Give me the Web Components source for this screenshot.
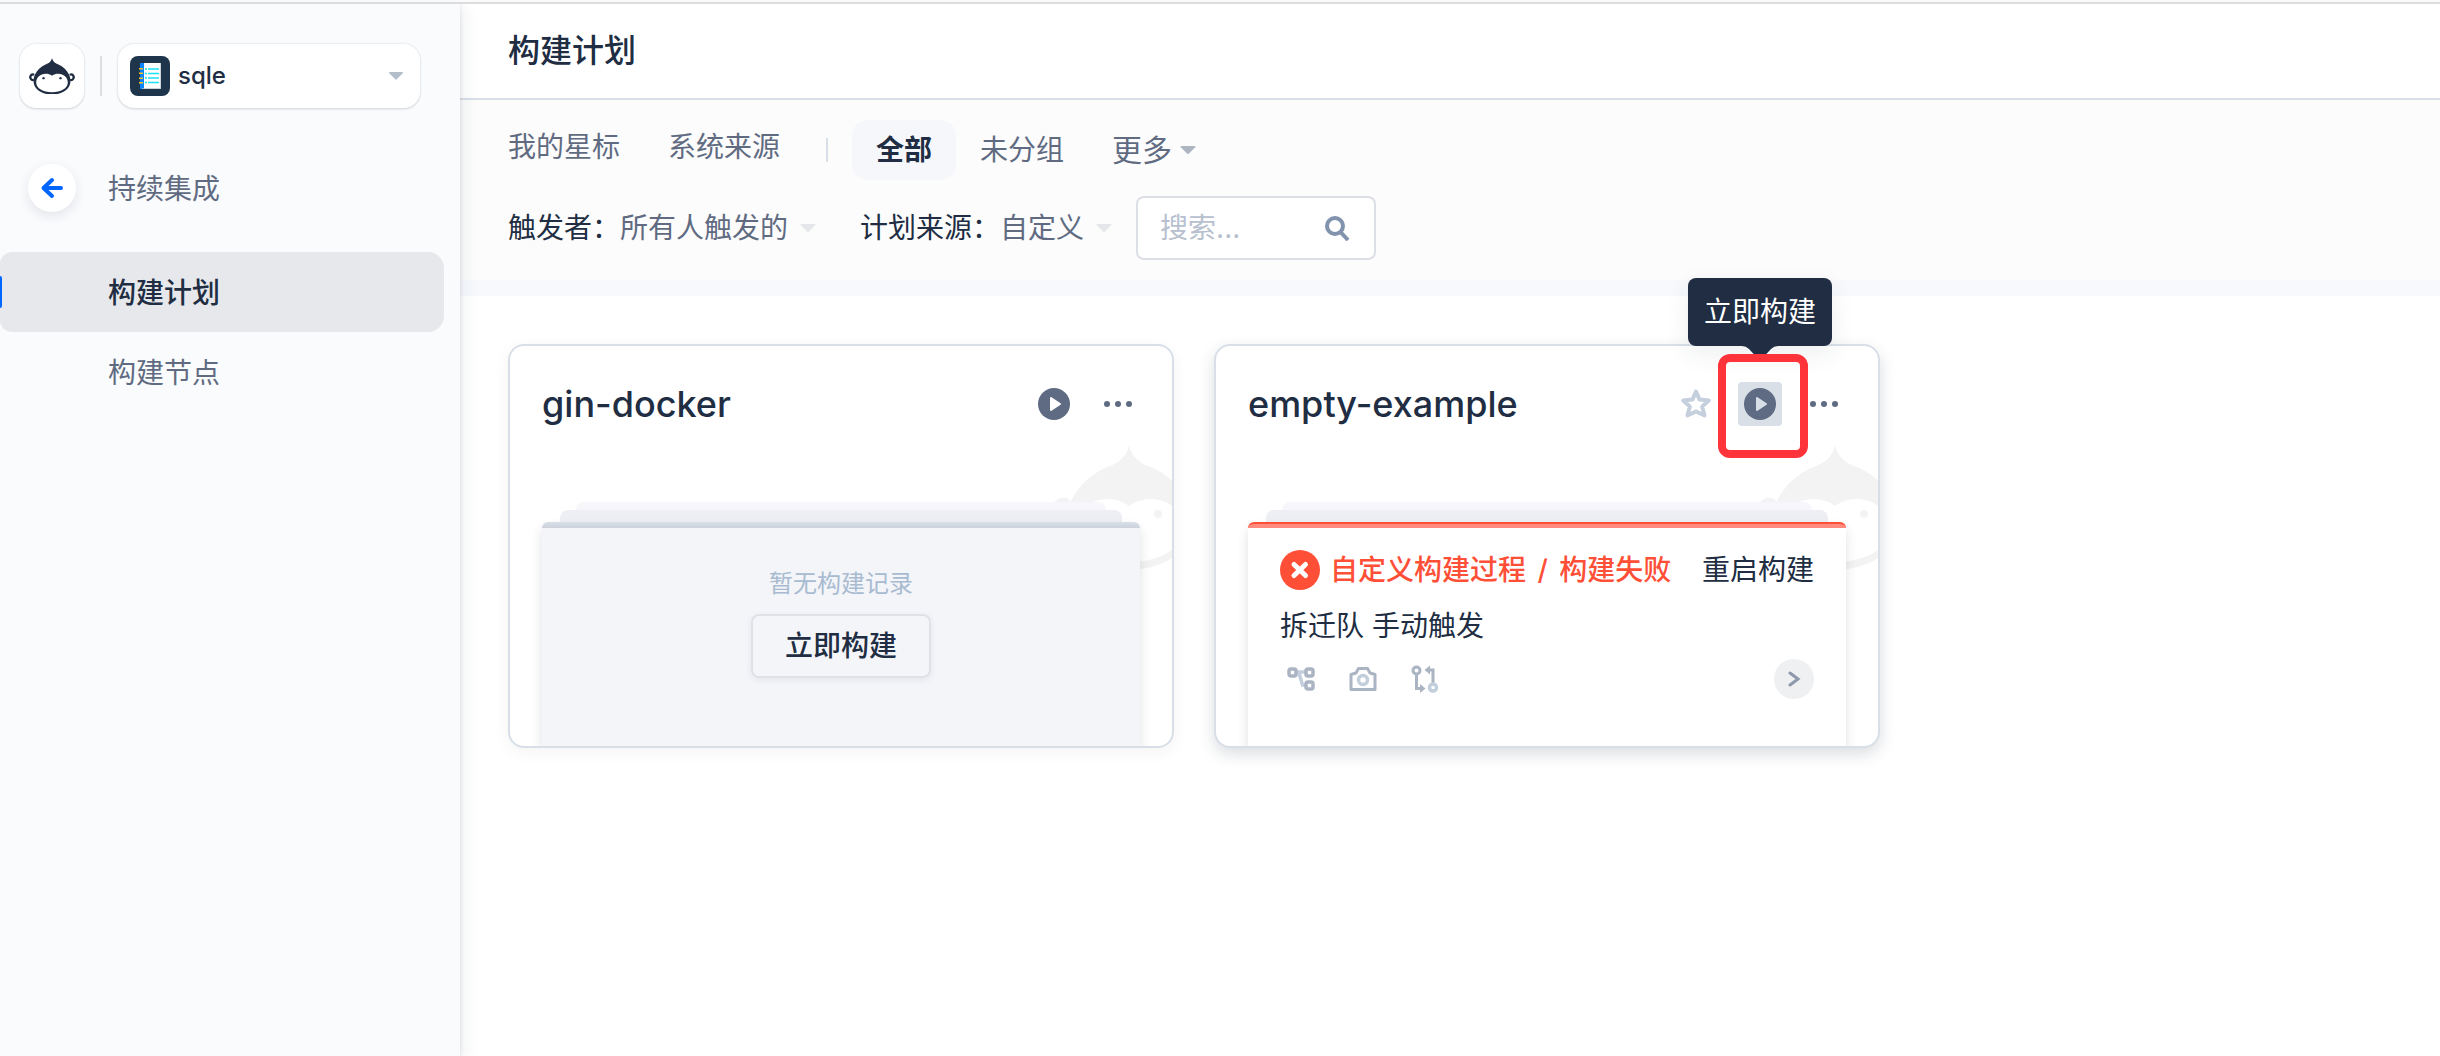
<!DOCTYPE html>
<html lang="zh-CN">
<head>
<meta charset="utf-8">
<title>构建计划</title>
<style>
:root {
  --ink: #202d42;
  --muted: #606b82;
  --line: #d8dfe7;
  --soft: #fafbfd;
  --blue: #0066ff;
  --red: #ff4f37;
}
html, body { margin: 0; min-height: 100%; background: #fff; }
body {
  font: 400 28px/40px Inter, "Noto Sans CJK SC", sans-serif;
  color: var(--ink);
}
</style>
</head>
<body>
<app-shell>
  <side-bar slot="side" project="sqle">
    <nav-item back href="#ci">持续集成</nav-item>
    <nav-item active href="#plans">构建计划</nav-item>
    <nav-item href="#nodes">构建节点</nav-item>
  </side-bar>
  <page-header slot="head">构建计划</page-header>
  <filter-panel slot="head"></filter-panel>
  <plan-card name="gin-docker">
    <empty-record></empty-record>
  </plan-card>
  <plan-card name="empty-example" failed hovered>
    <build-record stage="自定义构建过程" state="构建失败" trigger="拆迁队 手动触发"></build-record>
  </plan-card>
</app-shell>

<script>
const RESET = `
  :host, * { box-sizing: border-box; }
  button, input, select { font: inherit; color: inherit; margin: 0; padding: 0; border: 0; background: none; outline: none; }
  button, select { cursor: pointer; }
  a { color: inherit; text-decoration: none; }
  svg { display: block; }
`;

class BaseElement extends HTMLElement {
  connectedCallback() {
    if (this.shadowRoot) return;
    const root = this.attachShadow({ mode: 'open' });
    root.innerHTML = `<style>${RESET}${this.styles()}</style>${this.markup()}`;
  }
  styles() { return ''; }
  markup() { return '<slot></slot>'; }
}

customElements.define('app-shell', class extends BaseElement {
  styles() { return `
    :host { display: flex; flex-direction: column; min-height: 100vh; }
    .edge { height: 4px; flex: none; background: #fafafa; border-bottom: 2px solid #dcdcde; }
    .body { display: flex; flex: 1; }
    aside { width: 460px; flex: none; background: var(--soft); box-shadow: 0 0 4px rgba(32,45,66,.14), 4px 4px 16px rgba(32,45,66,.07); position: relative; z-index: 1; clip-path: inset(0 -24px 0 0); }
    main { flex: 1; min-width: 0; }
    .grid { display: grid; grid-template-columns: repeat(auto-fill, 666px); gap: 40px; padding: 48px; }
  `; }
  markup() { return `
    <div class="edge"></div>
    <div class="body">
      <aside><slot name="side"></slot></aside>
      <main><slot name="head"></slot><div class="grid"><slot></slot></div></main>
    </div>`; }
});

customElements.define('monkey-mark', class extends BaseElement {
  styles() { return `:host { display: block; } svg { width: 100%; height: auto; }`; }
  markup() { return `
    <svg viewBox="-82 0 164 126" fill="currentColor" aria-hidden="true">
      <path fill-rule="evenodd" d="M0 0C2 12 12 19 22 22C38 29 50 40 58 56C62 64 63 72 63 80C63 106 34 125 0 125S-63 106-63 80C-63 72-62 64-58 56C-50 40-38 29-22 22C-12 19-2 12 0 0Z
        M0 61C7 56 14 54 21 54C40 54 54 66 54 84C54 104 30 117 0 117S-54 104-54 84C-54 66-40 54-21 54C-14 54-7 56 0 61Z"/>
      <circle cx="-29" cy="69" r="4"/><circle cx="29" cy="69" r="4"/>
      <path d="M-59 55A12 13 0 1 0-60 77L-63 71A5 6 0 1 1-62 61Z"/>
      <path d="M59 55A12 13 0 1 1 60 77L63 71A5 6 0 1 0 62 61Z"/>
    </svg>`; }
});

customElements.define('side-bar', class extends BaseElement {
  styles() { return `
    :host { display: block; padding-top: 40px; }
    .top { display: flex; align-items: center; gap: 16px; padding: 0 40px 0 20px; margin-bottom: 40px; }
    .logo, .project { height: 64px; border-radius: 16px; background: #fff; box-shadow: 0 0 2px rgba(32,45,66,.22), 0 2px 2px rgba(32,45,66,.08); }
    .logo { width: 64px; display: grid; place-items: center; }
    monkey-mark { width: 48px; }
    .rule { width: 2px; height: 40px; background: #dcdee2; }
    .project { flex: 1; display: flex; align-items: center; gap: 8px; padding: 0 16px 0 12px; position: relative; }
    select { flex: 1; min-width: 0; appearance: none; font-size: 24px; font-weight: 500; line-height: 32px; height: 40px; }
    .caret { pointer-events: none; }
  `; }
  markup() { return `
    <div class="top">
      <button class="logo" aria-label="首页"><monkey-mark></monkey-mark></button>
      <span class="rule"></span>
      <label class="project">
        <svg width="40" height="40" viewBox="0 0 40 40" aria-hidden="true">
          <rect width="40" height="40" rx="8" fill="#1f354c"/>
          <path d="M10 7h4v26h-4z" fill="#0a84ff"/><path d="M14 7h17v26H14z" fill="#fff"/><path d="M12 32.300h19V33H12zM30.300 7h.7v26h-.7z" fill="#b9c4cc"/>
          <path d="M9 12h4v1.500H9zM9 16.500h4V18H9zM9 21.500h4V23H9zM9 26h4v1.500H9z" fill="#ffc21a"/>
          <path d="M15 13h2m1 0h11M15 17.500h2m1 0h11M15 22h2m1 0h11M15 26.500h2m1 0h11" stroke="#14e4f5" stroke-width="1.500"/>
        </svg>
        <select aria-label="项目"><option>${this.getAttribute('project')}</option></select>
        <svg class="caret" width="16" height="10" viewBox="0 0 16 10"><path d="M2 1h12q2 0 .5 1.500L9 8q-1 1-2 0L1.500 2.500Q0 1 2 1Z" fill="#b4becb"/></svg>
      </label>
    </div>
    <nav><slot></slot></nav>`; }
});

customElements.define('nav-item', class extends BaseElement {
  styles() { return `
    :host { display: block; color: var(--muted); }
    :host([back]) { margin-bottom: 24px; }
    :host([active]) { color: var(--ink); font-weight: 500; }
    a { position: relative; display: flex; align-items: center; height: 80px; margin-right: 16px; padding-left: 108px; border-radius: 12px 16px 16px 12px; }
    .text { padding-top: 2px; }
    :host([active]) a { background: #e7e8ec; }
    :host([active]) a::before { content: ""; position: absolute; left: 0; top: 24px; width: 2px; height: 32px; background: var(--blue); border-radius: 0 2px 2px 0; }
    :host([back]) a { padding-left: 28px; gap: 32px; }
    .round { width: 48px; height: 48px; display: grid; place-items: center; border-radius: 50%; background: #fff; box-shadow: 0 4px 12px rgba(32,45,66,.11); }
  `; }
  markup() {
    const arrow = this.hasAttribute('back') ? `<span class="round"><svg width="24" height="24" viewBox="0 0 24 24" fill="none" stroke="#0066ff" stroke-width="4" stroke-linecap="round" stroke-linejoin="round"><path d="M21 12H4M12 4L3.500 12L12 20"/></svg></span>` : '';
    return `<a href="${this.getAttribute('href')}">${arrow}<span class="text"><slot></slot></span></a>`;
  }
});

customElements.define('page-header', class extends BaseElement {
  styles() { return `
    :host { display: flex; align-items: center; height: 96px; padding: 0 48px; border-bottom: 2px solid var(--line); background: #fff; }
    h1 { margin: 0; font-size: 32px; line-height: 48px; font-weight: 500; }
  `; }
  markup() { return `<h1><slot></slot></h1>`; }
});

customElements.define('filter-panel', class extends BaseElement {
  styles() { return `
    :host { display: flex; flex-direction: column; gap: 16px; padding: 20px 48px; background: #fcfcfc; border-bottom: 16px solid #f7f9fd; }
    .row { display: flex; align-items: center; }
    .tabs { height: 60px; color: var(--muted); }
    .links { display: flex; gap: 48px; padding-bottom: 6px; }
    .rule { width: 2px; height: 24px; margin: 0 24px 0 46px; background: var(--line); }
    .tab { height: 60px; padding: 0 24px; border-radius: 16px; }
    .tab.on { background: #f5f7fb; color: var(--ink); font-weight: 700; }
    .more { display: flex; align-items: center; gap: 8px; font-size: 30px; }
    select { appearance: none; field-sizing: content; color: var(--muted); height: 40px; line-height: 40px; padding-right: 28px; }
    .pick { display: flex; align-items: center; }
    .pick svg { margin-left: -16px; pointer-events: none; }
    .pick + .pick { margin-left: 44px; }
    .search { display: flex; align-items: center; justify-content: space-between; width: 240px; height: 64px; margin-left: 24px; padding: 0 24px 0 22px; border: 2px solid #dddfe6; border-radius: 8px; background: #fff; }
    input { width: 120px; height: 40px; }
    input::placeholder { color: #b7c0ce; opacity: 1; }
  `; }
  markup() {
    const caret = c => `<svg width="16" height="10" viewBox="0 0 16 10"><path d="M1.500 1h13q2 0 .5 1.500L9 8.500q-1 1-2 0L1 2.500Q-.5 1 1.500 1Z" fill="${c}"/></svg>`;
    return `
    <div class="row tabs">
      <div class="links"><a href="#star">我的星标</a><a href="#system">系统来源</a></div>
      <span class="rule"></span>
      <button class="tab on">全部</button>
      <button class="tab">未分组</button>
      <button class="tab more">更多${caret('#adb5c0')}</button>
    </div>
    <div class="row">
      <div class="pick"><label for="who">触发者：</label><select id="who"><option>所有人触发的</option></select>${caret('#e5e7ea')}</div>
      <div class="pick"><label for="src">计划来源：</label><select id="src"><option>自定义</option></select>${caret('#e5e7ea')}</div>
      <label class="search"><input type="text" placeholder="搜索..." aria-label="搜索">
        <svg width="26" height="26" viewBox="0 0 26 26" fill="none" stroke="#8193ad" stroke-width="4"><circle cx="11" cy="11" r="8"/><path d="M16.500 17L24 25"/></svg>
      </label>
    </div>`; }
});

customElements.define('plan-card', class extends BaseElement {
  styles() { return `
    :host { display: block; position: relative; border: 2px solid var(--line); border-radius: 16px; background: #fff; box-shadow: 0 4px 16px rgba(32,45,66,.05); }
    :host([hovered]) { box-shadow: 0 6px 16px rgba(32,45,66,.16); }
    .mark { position: absolute; inset: 0; overflow: hidden; border-radius: 14px; color: #f3f3f3; }
    .mark monkey-mark { position: absolute; left: 537px; top: 99px; width: 164px; }
    header { position: relative; z-index: 1; display: flex; align-items: center; gap: 20px; height: 116px; padding: 0 32px; }
    h2 { flex: 1; min-width: 0; margin: 0; font-size: 36px; line-height: 48px; font-weight: 500; }
    button { width: 44px; height: 44px; display: grid; place-items: center; border-radius: 4px; }
    .play { position: relative; --hole: #fff; }
    :host([hovered]) .play button { background: var(--line); }
    :host([hovered]) .play { --hole: #d8dfe7; }
    .tip { position: absolute; left: 50%; bottom: calc(100% + 36px); translate: -50% 0; padding: 14px 16px; border-radius: 8px; background: var(--ink); color: #fff; white-space: nowrap; box-shadow: 0 8px 24px rgba(32,45,66,.08); }
    .tip svg { position: absolute; top: 100%; left: 50%; margin-left: -18px; }
    .focus { position: absolute; inset: -28px -26px -32px -20px; border: 8px solid #ff343b; border-radius: 12px; pointer-events: none; }
    .stack { position: relative; display: flex; flex-direction: column; align-items: center; margin-top: 40px; padding: 0 32px; overflow: hidden; border-radius: 0 0 14px 14px; }
    .back2 { width: calc(100% - 68px); height: 8px; border-radius: 8px 8px 0 0; background: #f7f7fb; }
    .back1 { width: calc(100% - 36px); height: 12px; border-radius: 8px 8px 0 0; background: #eeeff4; }
    .sheet { width: 100%; border-radius: 8px 8px 0 0; box-shadow: 0 6px 12px rgba(32,45,66,.14); }
    .cap { height: 6px; border-radius: 8px 8px 0 0; background: linear-gradient(#d8dfe7, #ccd2db); }
    :host([failed]) .cap { background: #ff8a7d; border-top: 2px solid var(--red); }
  `; }
  markup() {
    const hovered = this.hasAttribute('hovered');
    return `
    <div class="mark"><monkey-mark></monkey-mark></div>
    <header>
      <h2>${this.getAttribute('name')}</h2>
      ${hovered ? `<button aria-label="星标"><svg width="32" height="32" viewBox="0 0 32 32" fill="none" stroke="#c5cfdd" stroke-width="4" stroke-linejoin="round"><path d="M16 3.500L19.600 11.600L28.800 12.500L22.200 18.500L24.500 27.500L16 23.500L7.500 27.500L9.800 18.500L3.200 12.500L12.400 11.600Z"/></svg></button>` : ''}
      <div class="play">
        <button aria-label="立即构建"><svg width="32" height="32" viewBox="0 0 32 32"><circle cx="16" cy="16" r="16" fill="#5e6b82"/><path d="M13 10L22 16L13 22Z" fill="var(--hole)" stroke="var(--hole)" stroke-width="2" stroke-linejoin="round"/></svg></button>
        ${hovered ? `<div class="tip" role="tooltip">立即构建<svg width="36" height="14" viewBox="0 0 36 14"><path d="M0 0H36Q32 0 29 3L22 10.500Q18 14 14 10.500L7 3Q4 0 0 0Z" fill="#202d42"/></svg></div><span class="focus"></span>` : ''}
      </div>
      <button aria-label="更多操作"><svg width="28" height="6" viewBox="0 0 28 6" fill="#5e6b82"><circle cx="3" cy="3" r="3"/><circle cx="14" cy="3" r="3"/><circle cx="25" cy="3" r="3"/></svg></button>
    </header>
    <div class="stack">
      <div class="back2"></div><div class="back1"></div>
      <div class="sheet"><div class="cap"></div><slot></slot></div>
    </div>`; }
});

customElements.define('empty-record', class extends BaseElement {
  styles() { return `
    :host { display: flex; flex-direction: column; align-items: center; gap: 14px; height: 218px; padding-top: 40px; background: #f3f5f9; }
    p { margin: 0; font-size: 24px; line-height: 32px; color: #a9bbd1; }
    button { height: 64px; padding: 0 32px; border: 2px solid #dfe1e6; border-radius: 8px; font-weight: 500; box-shadow: 0 2px 6px rgba(32,45,66,.08); }
  `; }
  markup() { return `<p>暂无构建记录</p><button>立即构建</button>`; }
});

customElements.define('build-record', class extends BaseElement {
  styles() { return `
    :host { display: flex; flex-direction: column; height: 218px; padding: 22px 32px 0; background: #fff; }
    .row { display: flex; align-items: center; height: 40px; }
    .fail { flex: 1; display: flex; align-items: center; gap: 10px; color: var(--red); font-weight: 500; }
    .slash { margin: 0 4px; }
    p { margin: 16px 0 0; }
    .icons { gap: 34px; margin-top: 13px; padding-left: 7px; }
    .icons button { width: 28px; height: 28px; }
    .icons .go { width: 40px; height: 40px; margin-left: auto; display: grid; place-items: center; border-radius: 50%; background: #eef0f2; }
  `; }
  markup() {
    const a = n => this.getAttribute(n);
    return `
    <div class="row">
      <a class="fail" href="#record"><svg width="40" height="40" viewBox="0 0 40 40"><circle cx="20" cy="20" r="20" fill="#ff4f37"/><path d="M14 14.500L25.500 25.500M25.500 14.500L14 25.500" stroke="#fff" stroke-width="5" stroke-linecap="round"/></svg><span>${a('stage')} <span class="slash">/</span> ${a('state')}</span></a>
      <button>重启构建</button>
    </div>
    <p>${a('trigger')}</p>
    <div class="row icons">
      <button aria-label="流程"><svg width="28" height="28" viewBox="0 0 28 28" fill="none" stroke-width="3.500"><path d="M10 7H18M12 8L15.500 20H18" stroke="#c3cedc"/><g stroke="#aab4c3"><rect x="2" y="4" width="7" height="7" rx="2"/><rect x="19" y="4" width="7" height="7" rx="2"/><rect x="19" y="17" width="7" height="7" rx="2"/></g></svg></button>
      <button aria-label="快照"><svg width="28" height="28" viewBox="0 0 28 28" fill="none"><path d="M2 24.500V9.500L7 8L9.500 3.500H18.500L21 8L26 9.500V24.500Z" stroke="#aab4c3" stroke-width="3" stroke-linejoin="round"/><circle cx="14" cy="15" r="4.500" stroke="#c3cedc" stroke-width="3.500"/></svg></button>
      <button aria-label="合并请求"><svg width="28" height="28" viewBox="0 0 28 28" fill="none"><g stroke="#aab4c3" stroke-width="3"><circle cx="5.500" cy="5.500" r="3.500"/><path d="M5.500 9V23.500H10M22 18V5H18"/></g><path d="M9 19L14.500 23.500L9 28ZM19 0.500L13.500 5L19 9.500Z" fill="#aab4c3"/><circle cx="22" cy="22.500" r="3.500" stroke="#c3cedc" stroke-width="3.500"/></svg></button>
      <button class="go" aria-label="详情"><svg width="16" height="16" viewBox="0 0 16 16" fill="none" stroke="#8e99ab" stroke-width="3" stroke-linecap="round"><path d="M4 2L12 8L4 14"/></svg></button>
    </div>`; }
});
</script>
</body>
</html>
